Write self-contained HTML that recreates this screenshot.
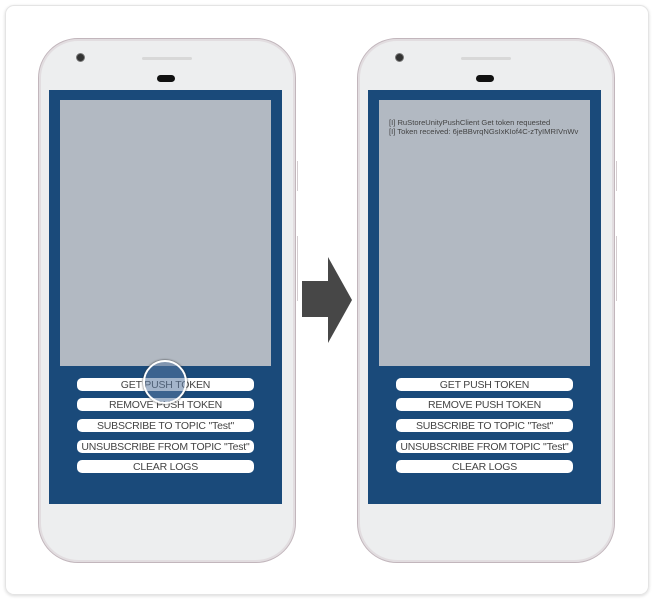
<!DOCTYPE html><html><head><style>
body{margin:0;width:654px;height:600px;background:#fff;position:relative;overflow:hidden;font-family:"Liberation Sans",sans-serif}
.frame{position:absolute;left:5px;top:5px;width:642px;height:588px;border:1px solid #e4e4e4;border-radius:9px;box-shadow:0 1px 3px rgba(0,0,0,.15)}
.phone{position:absolute;top:38px;width:256px;height:523px;border:1.5px solid #c2b6bc;border-radius:40px;background:#edeeef;box-shadow:inset 0 0 0 2px #e2dde0}
.scr{position:absolute;left:10px;top:51px;width:233px;height:414px;background:#1a4a7a}
.log{position:absolute;left:11px;top:10px;width:211px;height:266px;background:#b2b9c2;font-size:7.6px;color:#444;line-height:9px}
.btn{position:absolute;left:28px;width:177px;height:13px;background:#fff;border-radius:5px;font-size:10.5px;color:#444;text-align:center;line-height:14px;white-space:nowrap;letter-spacing:-.2px}
.cam{position:absolute;left:37px;top:14px;width:7px;height:7px;border-radius:50%;background:#333;border:1px solid #777}
.spk{position:absolute;left:103px;top:18px;width:50px;height:3px;border-radius:2px;background:#d8d8d8}
.ear{position:absolute;left:118px;top:36px;width:18px;height:7px;border-radius:4px;background:#111}
.sb{position:absolute;right:-3px;width:1px;background:#d4ccd0}
</style></head><body>
<div class="frame"></div>
<div class="phone" style="left:38px">
<div class="cam"></div><div class="spk"></div><div class="ear"></div>
<div class="sb" style="top:122px;height:30px"></div><div class="sb" style="top:197px;height:65px"></div>
<div class="scr"><div class="log"></div>
<div class="btn" style="top:288px">GET PUSH TOKEN</div>
<div class="btn" style="top:308px">REMOVE PUSH TOKEN</div>
<div class="btn" style="top:329px">SUBSCRIBE TO TOPIC "Test"</div>
<div class="btn" style="top:350px">UNSUBSCRIBE FROM TOPIC "Test"</div>
<div class="btn" style="top:370px">CLEAR LOGS</div>
<div style="position:absolute;left:94px;top:270px;width:40px;height:40px;border-radius:50%;border:2px solid #fff;background:rgba(90,120,160,.55);box-shadow:0 0 2px #333"></div>
</div></div>
<svg style="position:absolute;left:0;top:0" width="654" height="600"><polygon points="302,281 328,281 328,257 352,300 328,343 328,317 302,317" fill="#474747"/></svg>
<div class="phone" style="left:357px">
<div class="cam"></div><div class="spk"></div><div class="ear"></div>
<div class="sb" style="top:122px;height:30px"></div><div class="sb" style="top:197px;height:65px"></div>
<div class="scr"><div class="log"><div style="padding:18px 0 0 10px">[I] RuStoreUnityPushClient Get token requested<br>[I] Token received: 6jeBBvrqNGsIxKIof4C-zTyIMRIVnWv</div></div>
<div class="btn" style="top:288px">GET PUSH TOKEN</div>
<div class="btn" style="top:308px">REMOVE PUSH TOKEN</div>
<div class="btn" style="top:329px">SUBSCRIBE TO TOPIC "Test"</div>
<div class="btn" style="top:350px">UNSUBSCRIBE FROM TOPIC "Test"</div>
<div class="btn" style="top:370px">CLEAR LOGS</div>
</div></div>
</body></html>
